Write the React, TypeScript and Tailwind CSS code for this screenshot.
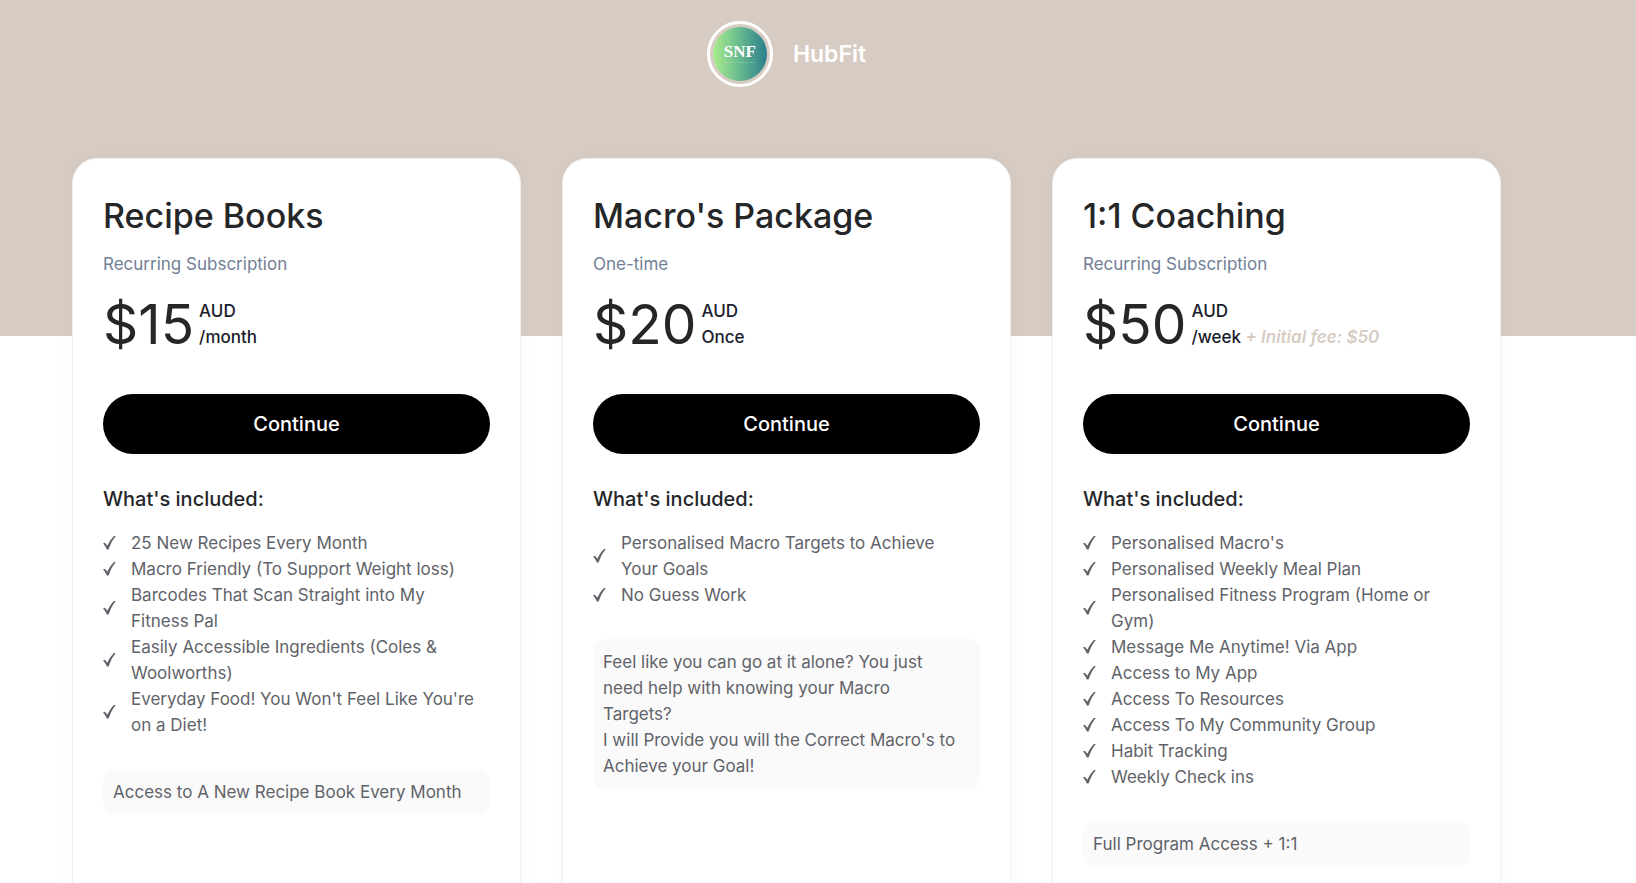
import React from 'react';

interface Plan {
  name: string;
  billing: string;
  price: string;
  period: string;
  initialFee?: string;
  features: string[];
  notes: string[];
}

const plans: Plan[] = [
  {
    name: 'Recipe Books',
    billing: 'Recurring Subscription',
    price: '$15',
    period: '/month',
    features: [
      '25 New Recipes Every Month',
      'Macro Friendly (To Support Weight loss)',
      'Barcodes That Scan Straight into My Fitness Pal',
      'Easily Accessible Ingredients (Coles & Woolworths)',
      "Everyday Food! You Won't Feel Like You're on a Diet!",
    ],
    notes: ['Access to A New Recipe Book Every Month'],
  },
  {
    name: "Macro's Package",
    billing: 'One-time',
    price: '$20',
    period: 'Once',
    features: ['Personalised Macro Targets to Achieve Your Goals', 'No Guess Work'],
    notes: [
      'Feel like you can go at it alone? You just need help with knowing your Macro Targets?',
      "I will Provide you will the Correct Macro's to Achieve your Goal!",
    ],
  },
  {
    name: '1:1 Coaching',
    billing: 'Recurring Subscription',
    price: '$50',
    period: '/week',
    initialFee: '+ Initial fee: $50',
    features: [
      "Personalised Macro's",
      'Personalised Weekly Meal Plan',
      'Personalised Fitness Program (Home or Gym)',
      'Message Me Anytime! Via App',
      'Access to My App',
      'Access To Resources',
      'Access To My Community Group',
      'Habit Tracking',
      'Weekly Check ins',
    ],
    notes: ['Full Program Access + 1:1'],
  },
];

const CheckIcon = () => (
  <svg viewBox="0 0 13 16" className="w-[13px] h-4 shrink-0" fill="currentColor" aria-hidden="true">
    <path d="M0 8.6 L1.8 7.7 C2.8 8.6 3.6 9.6 4.3 10.8 C6 7 8.2 3.6 10.9 0.9 L12.8 0.9 C9.7 4.6 7.4 9 5.6 14.4 L3.8 14.4 C2.9 12.1 1.6 10.2 0 8.6 Z" />
  </svg>
);

const Logo = () => (
  <div className="w-[66px] h-[66px] rounded-full border-3 border-white p-[3px]">
    <div className="w-full h-full rounded-full bg-linear-to-r from-[#a9ee8c] via-[#66b98e] to-[#2b7f8c] flex flex-col items-center pt-4 text-white">
      <span className="font-['Liberation_Serif',serif] font-bold text-[17px] leading-[18px]">SNF</span>
      <span className="mt-px w-8 border-t border-dotted border-white/30" />
    </div>
  </div>
);

const PlanCard: React.FC<{ plan: Plan }> = ({ plan }) => (
  <article className="bg-white border border-[#f0f0f0] rounded-[25px] shadow-[0_0_20px_rgba(0,0,0,0.03)] px-[30px] pt-[36px] pb-[40px]">
    <h2 className="text-[34px] leading-[42px] font-medium text-[#242628]">{plan.name}</h2>
    <p className="mt-[14px] text-[17px] leading-[26px] text-[#718096]">{plan.billing}</p>
    <div className="mt-[19px] flex items-center gap-[5px]">
      <span className="text-[55px] leading-[56px] text-[#242628]">{plan.price}</span>
      <div className="text-[17px] leading-[26px] font-medium text-[#1a202c]">
        <div>AUD</div>
        <div>
          {plan.period}
          {plan.initialFee && <em className="text-[#d7ccc3] font-semibold"> {plan.initialFee}</em>}
        </div>
      </div>
    </div>
    <button
      type="button"
      className="mt-[42px] w-full h-[60px] rounded-full bg-black text-white text-[20px] font-medium cursor-pointer"
    >
      Continue
    </button>
    <h3 className="mt-[30px] text-[20px] leading-[30px] font-medium text-[#242628]">What's included:</h3>
    <ul className="mt-[16px] pr-[10px] text-[17px] leading-[26px] text-[#5f6369]">
      {plan.features.map((feature) => (
        <li key={feature} className="flex items-center gap-[15px]">
          <CheckIcon />
          <span>{feature}</span>
        </li>
      ))}
    </ul>
    <div className="mt-[31px] rounded-[12px] bg-[#fafafa] py-[10px] pl-[10px] pr-5 text-[17px] leading-[26px] text-[#5f6369]">
      {plan.notes.map((note) => (
        <p key={note}>{note}</p>
      ))}
    </div>
  </article>
);

const App: React.FC = () => {
  return (
    <div className="h-screen overflow-hidden bg-[linear-gradient(#d7ccc3_336px,#ffffff_336px)] font-['Inter',sans-serif]">
      <div className="pl-[72px] pr-[135px] pt-[21px]">
        <header className="flex items-center justify-center gap-5">
          <Logo />
          <h1 className="text-[23px] leading-[30px] font-semibold text-white">HubFit</h1>
        </header>
        <main className="mt-[71px] grid grid-cols-3 gap-[41px]">
          {plans.map((plan) => (
            <PlanCard key={plan.name} plan={plan} />
          ))}
        </main>
      </div>
    </div>
  );
};

export default App;
